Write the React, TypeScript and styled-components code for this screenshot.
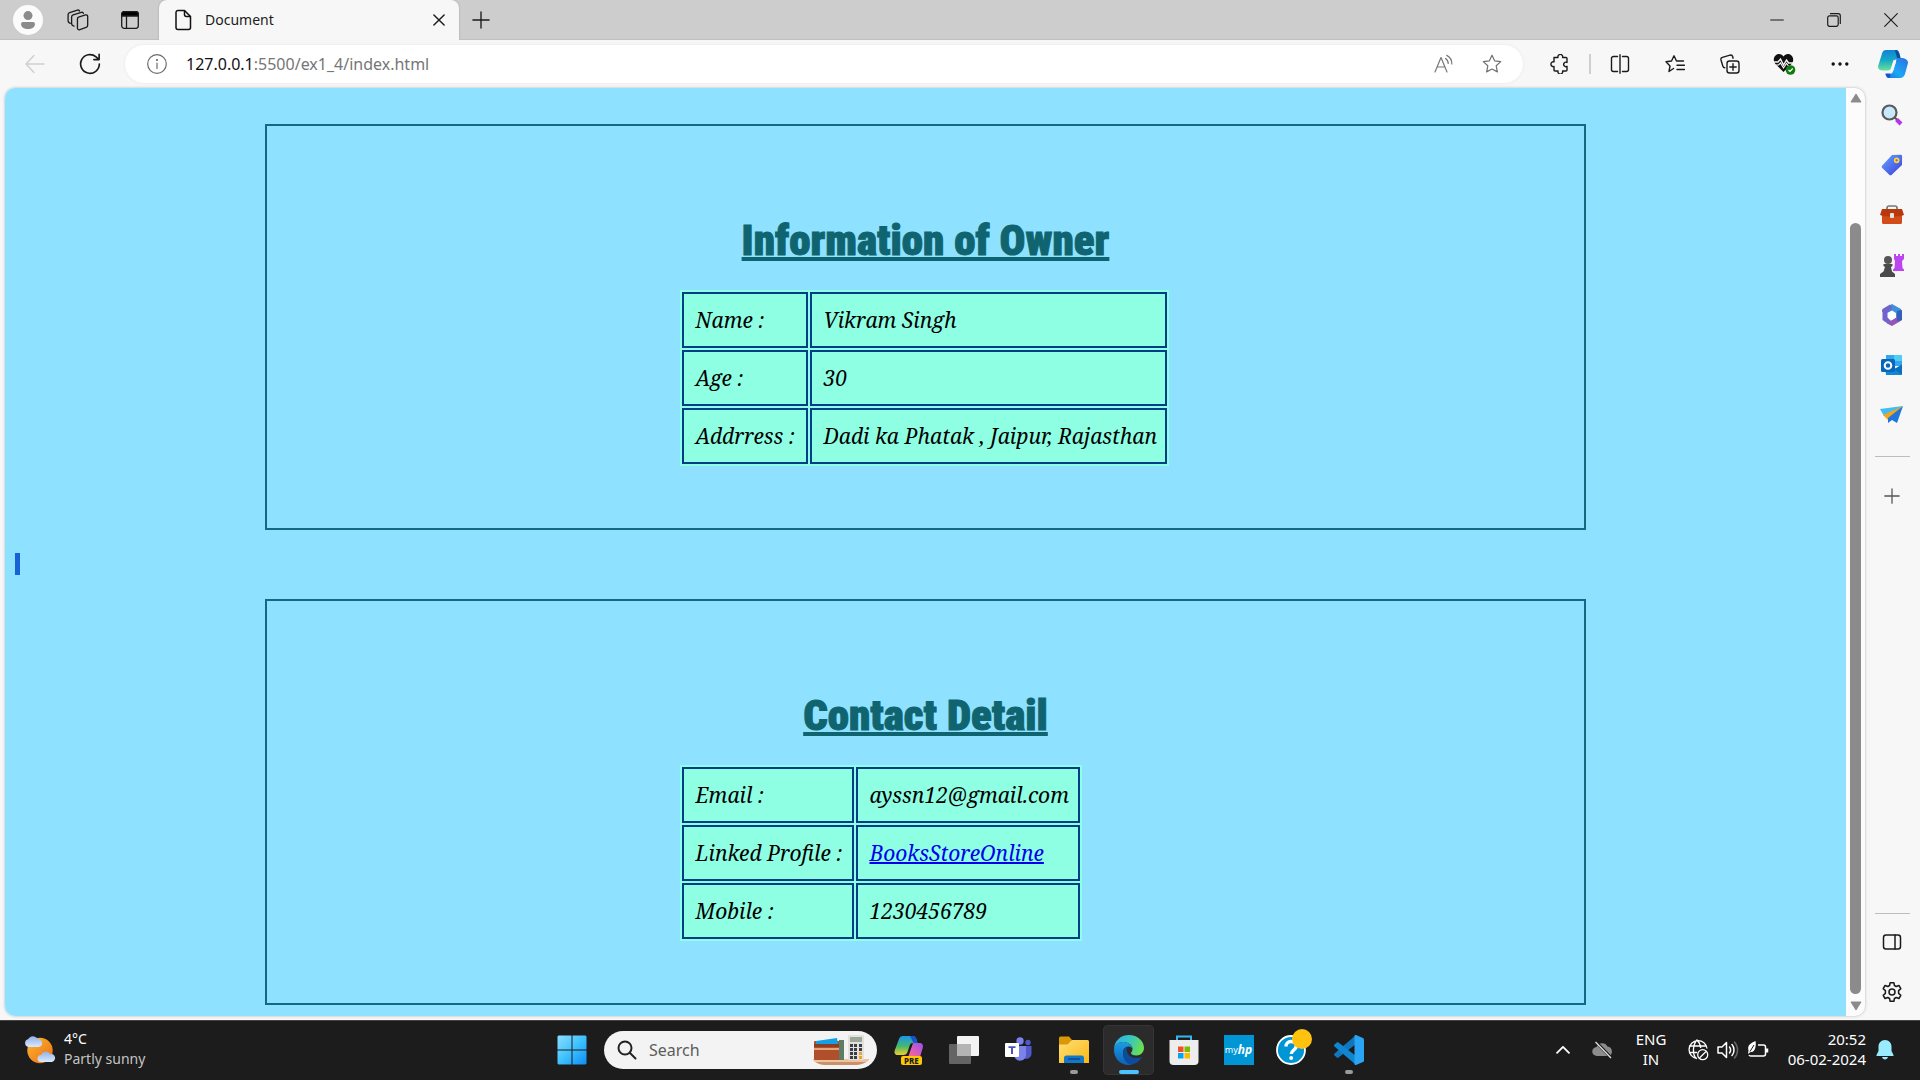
import React from 'react';
import styled, { createGlobalStyle, css } from 'styled-components';

const ui = '"Segoe UI", "Noto Sans", "Open Sans", sans-serif';

const Global = createGlobalStyle`
  * { box-sizing: border-box; }
  body { margin: 0; background: #f7f7f7; font-family: ${ui}; color: #1b1b1b; }
  button { border: 0; padding: 0; background: none; color: inherit; font: inherit; cursor: pointer; }
  svg { display: block; flex: none; }
`;

const Screen = styled.div`
  display: flex;
  flex-direction: column;
  height: 100vh;
  overflow: hidden;
`;

/* ---------- tab strip ---------- */
const TabStrip = styled.header`
  display: flex;
  flex: none;
  height: 40px;
  background: #cdcdcd;
  box-shadow: inset 0 -1px 0 #c0c0c0;
`;
const StripButton = styled.button<{ $w: number }>`
  display: grid;
  place-items: center;
  width: ${p => p.$w}px;
  height: 40px;
`;
const Avatar = styled.span`
  display: grid;
  place-items: center;
  width: 30px;
  height: 30px;
  border-radius: 50%;
  background: #fbfbfb;
`;
const Tab = styled.div`
  display: flex;
  align-items: center;
  width: 300px;
  padding: 0 8px 0 15px;
  border-radius: 8px 8px 0 0;
  background: #f7f7f7;
  box-shadow: 0 0 2px #9a9a9a;
  clip-path: inset(0 -3px 0 -3px);
`;
const TabTitle = styled.span`
  flex: 1;
  margin-left: 13px;
  font-size: 14px;
  line-height: 20px;
`;
const Spacer = styled.div`
  flex: 1;
`;

/* ---------- toolbar ---------- */
const Toolbar = styled.nav`
  display: flex;
  flex: none;
  align-items: center;
  height: 48px;
  padding: 0 1px 0 7px;
`;
const ToolButton = styled.button<{ $w?: number }>`
  display: grid;
  flex: none;
  place-items: center;
  width: ${p => p.$w ?? 55}px;
  height: 40px;
`;
const AddressBar = styled.label`
  display: flex;
  flex: 1;
  align-items: center;
  height: 38px;
  margin: 0 9px 0 8px;
  padding: 0 7px 0 22px;
  border-radius: 19px;
  background: #fff;
  box-shadow: 0 0 3px #e6e6e6;
  font-size: 16px;
  line-height: 24px;
`;
const Host = styled.span`
  margin-left: 19px;
  color: #111;
`;
const AddressInput = styled.input`
  flex: 1;
  min-width: 0;
  padding: 0;
  border: 0;
  outline: 0;
  background: none;
  color: #767676;
  font: inherit;
`;
const ToolDivider = styled.span`
  width: 2px;
  height: 20px;
  margin: 0 1px 0 2px;
  background: #cfcfcf;
`;

/* ---------- main area ---------- */
const Main = styled.div`
  display: flex;
  flex: 1;
  min-height: 0;
  padding-left: 5px;
`;
const Viewport = styled.div`
  display: flex;
  flex: 1;
  margin-bottom: 4px;
  overflow: hidden;
  border-radius: 10px;
  background: #fcfcfc;
  box-shadow: 0 0 3px #b4b4b4;
`;
const Page = styled.main`
  flex: 1;
  padding-top: 36px;
  overflow: hidden;
  background: #8ee2ff;
  color: #000;
`;
const Card = styled.section`
  margin: 0 260px;
  padding: 87px 0 62px;
  border: 2px solid #116a7f;
`;
const Heading = styled.h1`
  margin: 0 0 23px;
  color: #0f6470;
  font-family: "Roboto Condensed", "Liberation Sans Narrow", "DejaVu Sans Condensed", sans-serif;
  font-size: 43px;
  font-weight: 900;
  line-height: 54px;
  text-align: center;
  text-decoration: underline;
  text-decoration-thickness: 4px;
  text-decoration-skip-ink: none;
  text-underline-offset: 2px;
  -webkit-text-stroke: 1px #0f6470;
`;
const Details = styled.table`
  margin-left: calc(50% - 246px);
  border-spacing: 2px;
  background: #8effe3;
  font-family: "Noto Serif", "DejaVu Serif Condensed", "Liberation Serif", serif;
  font-size: 21px;
  font-style: italic;
  line-height: 28px;
`;
const cell = css`
  height: 56px;
  padding: 0 7px 0 12px;
  border: 2px solid #003f88;
  font-weight: 400;
  text-align: left;
  white-space: nowrap;
`;
const Label = styled.th<{ $w: number }>`
  ${cell}
  min-width: ${p => p.$w}px;
`;
const Value = styled.td<{ $w: number }>`
  ${cell}
  min-width: ${p => p.$w}px;
`;
const ProfileLink = styled.a`
  color: #0000ee;
  text-decoration-thickness: 2px;
  text-decoration-skip-ink: none;
`;
const BlankLine = styled.div`
  height: 69px;
  padding: 23px 10px;
`;
const SelectedBreak = styled.span`
  display: block;
  width: 5px;
  height: 22px;
  background: #1763d6;
`;

const ScrollBar = styled.div`
  display: flex;
  flex-direction: column;
  align-items: center;
  width: 19px;
`;
const ScrollArrow = styled.button`
  display: grid;
  place-items: center;
  width: 19px;
  height: 20px;
`;
const ScrollGap = styled.div`
  flex: 115;
`;
const Thumb = styled.div`
  flex: 771;
  width: 11px;
  margin-bottom: 2px;
  border-radius: 6px;
  background: #8b8b8b;
`;

const Sidebar = styled.aside`
  display: flex;
  flex-direction: column;
  align-items: center;
  width: 55px;
  padding: 2px 1px 3px 0;
`;
const SideButton = styled.button`
  display: grid;
  place-items: center;
  width: 40px;
  height: 50px;
`;
const SideRule = styled.hr`
  width: 35px;
  height: 1px;
  margin: 16px 0 14px;
  border: 0;
  background: #bdbdbd;
`;
const LowerRule = styled(SideRule)`
  margin: 0 0 3px;
`;

/* ---------- taskbar ---------- */
const Taskbar = styled.footer`
  display: grid;
  flex: none;
  grid-template-columns: 1fr auto 1fr;
  align-items: center;
  height: 60px;
  padding-bottom: 2px;
  border-top: 1px solid #444;
  background: #1c1c1c;
  color: #fff;
  font-size: 15px;
  line-height: 20px;
`;
const Weather = styled.button`
  display: flex;
  gap: 8px;
  align-items: center;
  padding-left: 24px;
  font-size: 14px;
  text-align: left;
`;
const Lines = styled.span`
  display: flex;
  flex-direction: column;
  padding-bottom: 2px;
`;
const Dim = styled.span`
  color: #c4c4c4;
`;
const Apps = styled.div`
  display: flex;
  align-items: center;
`;
const AppButton = styled.button<{ $active?: boolean }>`
  position: relative;
  display: grid;
  place-items: center;
  width: 51px;
  height: 50px;
  margin: 0 2px;
  border-radius: 5px;
  ${p => p.$active && css`background: #2b2b2b; box-shadow: inset 0 0 0 1px #353535;`}
`;
const Indicator = styled.span<{ $active?: boolean }>`
  position: absolute;
  bottom: 1px;
  left: 50%;
  width: ${p => (p.$active ? 20 : 8)}px;
  height: 4px;
  border-radius: 2px;
  background: ${p => (p.$active ? '#4cc2ff' : '#9a9a9a')};
  transform: translateX(-50%);
`;
const SearchBox = styled.label`
  display: flex;
  align-items: center;
  width: 273px;
  height: 38px;
  margin: 0 4px 0 5px;
  padding: 0 8px 0 13px;
  border-radius: 19px;
  background: #f3f3f3;
`;
const SearchInput = styled.input`
  flex: 1;
  min-width: 0;
  padding: 0 0 0 12px;
  border: 0;
  outline: 0;
  background: none;
  font-family: ${ui};
  font-size: 16px;
  line-height: 24px;
  &::placeholder { color: #5c5c5c; opacity: 1; }
`;
const Tray = styled.div`
  display: flex;
  align-items: center;
  justify-content: flex-end;
  padding-right: 21px;
`;
const TrayButton = styled.button<{ $w: number }>`
  display: grid;
  place-items: center;
  width: ${p => p.$w}px;
  height: 48px;
`;
const Quick = styled.button`
  display: flex;
  gap: 8px;
  align-items: center;
  margin-left: 10px;
`;
const Clock = styled.button`
  width: 92px;
  margin: 0 5px;
  text-align: right;
  white-space: nowrap;
`;

/* ---------- line icons ---------- */
const Line = ({ size = 20, w = 1.4, color = '#1b1b1b', children }: { size?: number; w?: number; color?: string; children: React.ReactNode }) => (
  <svg width={size} height={size} viewBox="0 0 20 20" fill="none" stroke={color} strokeWidth={w} strokeLinecap="round" strokeLinejoin="round" aria-hidden="true">
    {children}
  </svg>
);

const starPath = 'M10 1.2l2.6 5.6 6.1.8-4.5 4.2 1.2 6.1L10 15l-5.4 2.9 1.2-6.1L1.3 7.6l6.1-.8z';

const ToolIcons = {
  person: (
    <svg width="16" height="18" viewBox="0 0 16 18" fill="#8b8b8b"><circle cx="8" cy="4.6" r="4.5" /><path d="M1 13a2 2 0 0 1 2-2h10a2 2 0 0 1 2 2c0 3-3 5-7 5s-7-2-7-5z" /></svg>
  ),
  workspaces: (
    <Line size={22} w={1.2}>
      <path d="M10.500 7.300l6.300-1.900c1-.3 2 .3 2 1.400v8c0 1-.5 1.700-1.400 2l-5.700 2c-1.100.4-2.200-.3-2.200-1.400V9c0-.8.300-1.500 1-1.700z" />
      <path d="M6.400 15.600l-1-.4a2 2 0 0 1-1.200-1.800V7.200a2 2 0 0 1 1.400-1.900L13 3c1-.2 1.700.2 1.900.9" />
      <path d="M3 13l-.8-.4A2 2 0 0 1 1 10.800V5.200a2 2 0 0 1 1.400-1.900L9.500 1c1-.2 1.700.2 1.900.9" />
    </Line>
  ),
  tabs: (
    <Line w={1.3}>
      <rect x="1.700" y="1.700" width="16.600" height="16.600" rx="2.500" />
      <path d="M1.700 6V4a2.300 2.300 0 0 1 2.300-2.300h12A2.300 2.300 0 0 1 18.300 4v2z" fill="#000" />
      <path d="M6.500 6v12" />
    </Line>
  ),
  doc: (
    <svg width="18" height="22" viewBox="0 0 18 22" fill="none" stroke="#111" strokeWidth="1.500" strokeLinejoin="round"><path d="M4 1.500h6.500L16.500 7.500v11a2 2 0 0 1-2 2H4a2 2 0 0 1-2-2v-15a2 2 0 0 1 2-2z" /><path d="M10.500 1.500v4a2 2 0 0 0 2 2h4" /></svg>
  ),
  back: <Line color="#cfcfcf"><path d="M19 10H1M9 1.500L1 10l8 8.500" /></Line>,
  refresh: <Line size={22} w={1.500}><path d="M18.500 10a8.500 8.500 0 1 1-3-6.500l2.500 2.200M18.300 1.200v4.800h-4.800" /></Line>,
  info: <Line w={1.200} color="#6b6b6b"><circle cx="10" cy="10" r="9.300" /><path d="M10 9v5.500" /><circle cx="10" cy="6" r=".5" fill="#6b6b6b" /></Line>,
  readAloud: <Line color="#777" w={1.200}><path d="M1 18L7 3.500 13 18M3 13h8" /><path d="M11.500 4.500a6 6 0 0 1 2.700 5M12.800 1.400a9.500 9.500 0 0 1 5 8.600" /></Line>,
  star: <Line color="#707070" w={1.200}><path d={starPath} /></Line>,
  puzzle: <Line><path d="M4 3.500h4a2.400 2.400 0 1 1 4.600 0H16c.6 0 1 .4 1 1v4a2.200 2.200 0 1 0 0 3.800V16c0 .6-.4 1-1 1h-3.400a2.400 2.400 0 1 1-4.600 0H5c-.6 0-1-.4-1-1v-3.500a2.400 2.400 0 1 1 0-4.600z" /></Line>,
  split: <Line><path d="M7.500 2.500h-4a2 2 0 0 0-2 2v11a2 2 0 0 0 2 2h4M12.500 2.500h4a2 2 0 0 1 2 2v11a2 2 0 0 1-2 2h-4M10 .8v18.400" /></Line>,
  favorites: <Line><path d="M8.500 14.500L4 17.500 5 12 1 7.800l5.500-.8L9 1.800 11.500 7h7M12 11.300h7.500M12 15.500h7.500" /></Line>,
  collections: <Line><rect x="7" y="7" width="12" height="12" rx="2.500" /><path d="M13 9.800v6.400M9.800 13h6.400M4.800 13.800c-1 0-1.700-.8-2-1.800L1 6c-.3-1.200.3-2.300 1.400-2.600L10 1.200c1.200-.3 2.300.2 2.600 1.300l.5 1.700" /></Line>,
  heart: (
    <svg width="23" height="22" viewBox="0 0 23 22"><path d="M10.500 19L2 10.500C-1 6 2 1 6 1c2 0 3.500 1 4.500 2.500C11.500 2 13 1 15 1c4 0 7 5 4 9.500z" fill="#111" /><path d="M1 9h4l2.500-3 3 6 3-5 2 3h5" fill="none" stroke="#f7f7f7" strokeWidth="1.400" /><path d="M3 12h2.500L7.500 10l3 5 3-4.500 2 2.500" fill="none" stroke="#f7f7f7" strokeWidth="1.100" /><circle cx="17.500" cy="17" r="4.800" fill="#107c10" /><path d="M15.500 17l1.500 1.500 2.700-3" fill="none" stroke="#fff" strokeWidth="1.200" /></svg>
  ),
  dots: <svg width="18" height="4" viewBox="0 0 18 4" fill="#111"><circle cx="2.200" cy="2" r="1.700" /><circle cx="9" cy="2" r="1.700" /><circle cx="15.800" cy="2" r="1.700" /></svg>,
};

const CopilotBlue = () => (
  <svg width="30" height="28" viewBox="0 0 30 28">
    <defs>
      <linearGradient id="cb1" x1="0" y1="0" x2="0" y2="1"><stop offset="0" stopColor="#1283d8" /><stop offset=".5" stopColor="#16a9c4" /><stop offset="1" stopColor="#69e29a" /></linearGradient>
      <linearGradient id="cb2" x1="1" y1="0" x2="0" y2="1"><stop offset="0" stopColor="#2a6fe0" /><stop offset=".6" stopColor="#1da8f5" /><stop offset="1" stopColor="#1672e0" /></linearGradient>
    </defs>
    <path d="M13 8h10c4 0 7 1.500 7 5l-3 11c-.8 2.500-2.500 4-5 4H11c-2 0-3-2-3.500-4h4c2 0 3-1 3.500-3l3-9z" fill="url(#cb2)" />
    <path d="M8 0h10c2.500 0 3.500 3 4.500 8h-4c-2 0-2.700 1-3.300 3L13 18c-.5 1.800-1.500 2.500-4 2.500H5c-4 0-5.500-2-4.700-5L4 3.500C4.700 1 6 0 8 0z" fill="url(#cb1)" />
    <path d="M17.500 9.500h1l-3.200 11c-.6 1.900-1.800 3-3.800 3h-2c2.200-1.200 3.300-2.500 4-5l1.700-6c.4-1.800 1-2.700 2.300-3z" fill="#f7f7f7" />
    <path d="M7.500 23.500c2 0 4 0 5 0l-1 4.500C9 28 8 26 7.500 23.500z" fill="#1452cf" />
    <path d="M17 0h1c2.500 0 3.500 3 4.500 8H19z" fill="#0a4f9c" />
  </svg>
);

/* ---------- sidebar drawings ---------- */
const SideIcons = {
  search: <svg width="22" height="22" viewBox="0 0 22 22"><path d="M13.500 13.500l3 2.500" stroke="#555" strokeWidth="2" /><path d="M15.500 15.500l4.500 4.500" stroke="#b834e8" strokeWidth="4" /><circle cx="8.500" cy="8.500" r="7" fill="#c8e8fb" stroke="#5a5a5a" strokeWidth="2.200" /></svg>,
  tag: <svg width="22" height="22" viewBox="0 0 22 22"><defs><linearGradient id="tg" x1="0" y1="0" x2="1" y2="1"><stop offset="0" stopColor="#6aa4ff" /><stop offset="1" stopColor="#383fd8" /></linearGradient></defs><path d="M11 1l8.500-.2a1.500 1.500 0 0 1 1.600 1.600L21 11 11 20.500a2 2 0 0 1-3 0l-6.500-6.200a2 2 0 0 1 0-3z" fill="url(#tg)" /><circle cx="15.700" cy="6.300" r="2" fill="#5a72f0" stroke="#ffd238" strokeWidth="1.700" /></svg>,
  toolbox: <svg width="24" height="20" viewBox="0 0 24 20"><path d="M7 5V3a2 2 0 0 1 2-2h6a2 2 0 0 1 2 2v2" fill="none" stroke="#777" strokeWidth="1.700" /><rect x="2" y="9" width="20" height="10" rx="1.500" fill="#d34b18" /><path d="M2 4h20l2 6c-4 2-20 2-24 0z" fill="#b8380c" /><rect x="10" y="8" width="4" height="5" rx="1" fill="#e2e2e2" /></svg>,
  chess: <svg width="24" height="24" viewBox="0 0 24 24"><path d="M14 1h2v2h2V1h2v2h2V1h2v5l-2 2 .5 7 1.500 1.500V18H13v-1.500l1.500-1.500.5-7-1-2z" fill="#bb45ee" /><circle cx="8" cy="7" r="4" fill="#555" /><path d="M3.500 11h9v2l-1.500 1 1 4.500 3 2.500v3H0v-3l3.500-2.500L5 14l-1.500-1z" fill="#4a4a4a" /></svg>,
  m365: <svg width="22" height="24" viewBox="0 0 22 24"><path d="M11 1l9 5 1 7-6 1-4-6-5 2-5-1V7z" fill="#3f8fdc" /><path d="M9 1.500L1.500 6v11l5 3.500 4-2-4-4V9l5-4z" fill="#7362cc" /><path d="M6 20.500l5 2.500 9.500-5.500V13l-5 1-4.500 3z" fill="#9257b8" /><path d="M16 8l5-1v10l-5 1z" fill="#365fbc" /><path d="M11 7.500l4 2.400v4.600l-4 2.400-4-2.400V9.900z" fill="#fff" /></svg>,
  outlook: <svg width="22" height="22" viewBox="0 0 22 22"><rect x="5" y="1" width="16" height="11" fill="#34a6ec" /><path d="M13 1h8v6h-8z" fill="#52ccf5" /><path d="M4 11l9 5 8-6v10a1 1 0 0 1-1 1H5z" fill="#1386d6" /><path d="M13 15l8 6V11z" fill="#0c6ebd" /><rect x="0" y="5" width="14" height="13" rx="1.500" fill="#0668bc" /><circle cx="7" cy="11.500" r="3.300" fill="none" stroke="#fff" strokeWidth="2" /></svg>,
  plane: <svg width="24" height="18" viewBox="0 0 24 18"><path d="M0 3l23-3-11 8-8 2z" fill="#41bdf1" /><path d="M3 9L23 0 8 14z" fill="#f3a51d" /><path d="M23 0l-6 17-5-3-4 3v-5z" fill="#2176dc" /></svg>,
  plus: <Line size={16} w={1.600} color="#555"><path d="M10 1v18M1 10h18" /></Line>,
  panel: <Line w={1.500}><rect x="1.500" y="3" width="17" height="14" rx="2.500" /><path d="M13 3v14" /></Line>,
  gear: <Line size={22} w={1.400}><circle cx="10" cy="10" r="2.700" /><path d="M8.300 1.500h3.400l.5 2.600 1.600.9 2.500-.9L18 7l-2 1.800v2.400L18 13l-1.700 2.900-2.500-.9-1.600.9-.5 2.600H8.300l-.5-2.600-1.600-.9-2.500.9L2 13l2-1.800V8.800L2 7l1.700-2.900 2.500.9 1.600-.9z" /></Line>,
};

/* ---------- taskbar drawings ---------- */
const WeatherIcon = () => (
  <svg width="32" height="30" viewBox="0 0 32 30">
    <defs>
      <linearGradient id="sun" x1="0" y1="0" x2="1" y2="1"><stop offset="0" stopColor="#f9b934" /><stop offset="1" stopColor="#ef6c12" /></linearGradient>
      <linearGradient id="cl" x1="0" y1="0" x2="0" y2="1"><stop offset="0" stopColor="#8fb2ec" /><stop offset="1" stopColor="#dce8fb" /></linearGradient>
    </defs>
    <circle cx="16" cy="15.500" r="12.700" fill="url(#sun)" />
    <path d="M4.500 12a4 4 0 0 1-.5-7.800A5.500 5.500 0 0 1 13.500 4a4 4 0 0 1 1 8z" fill="url(#cl)" />
    <path d="M17 27a3.500 3.500 0 0 1 0-7 5 5 0 0 1 9-1 4 4 0 0 1 2 8z" fill="url(#cl)" />
  </svg>
);
const WindowsLogo = () => (
  <svg width="30" height="30" viewBox="0 0 30 30">
    <defs><linearGradient id="win" gradientUnits="userSpaceOnUse" x1="0" y1="0" x2="30" y2="30"><stop offset="0" stopColor="#8fe0ff" /><stop offset=".5" stopColor="#3fc1ff" /><stop offset="1" stopColor="#0b8cf5" /></linearGradient></defs>
    <path d="M1.500.5H14.500V14.500H.5V1.500zM15.500.5h13l1 1v13h-14zM.5 15.500h14v14h-13l-1-1zM15.500 15.500h14v13l-1 1h-13z" fill="url(#win)" />
  </svg>
);
const WalletArt = () => (
  <svg width="56" height="30" viewBox="0 0 56 30">
    <path d="M0 24h56c-2 4-9 6-14 6H14C7 30 2 28 0 24z" fill="#c9916a" />
    <path d="M0 24h56l-2 3H2z" fill="#eec49f" />
    <rect x="1" y="6" width="28" height="19" rx="1" fill="#b04f2b" />
    <path d="M3 6l21-3 1 6H3z" fill="#14a0e6" />
    <path d="M1 9h28v3H1z" fill="#8e3d20" />
    <path d="M1 13h25v2H1z" fill="#e5a67c" />
    <rect x="26" y="5" width="5" height="20" fill="#5f7d65" />
    <rect x="35" y="0" width="16" height="25" rx="1" fill="#e4e0dc" />
    <rect x="37" y="2" width="12" height="5" fill="#9aa79a" />
    {[9, 13, 17, 21].map(y => [37, 41, 46].map(x => <rect key={`${x}${y}`} x={x} y={y} width="3" height="3" fill={x === 46 && y > 15 ? '#eda22c' : '#393d45'} />))}
  </svg>
);
const PreLabel = styled.span`
  position: absolute;
  top: 31px;
  left: 18px;
  padding: 0 3px;
  border-radius: 2px;
  background: #ffc800;
  color: #1c1c1c;
  font-size: 8px;
  font-weight: 800;
  line-height: 9px;
`;
const CopilotColor = () => (
  <svg width="30" height="30" viewBox="0 0 30 30">
    <defs>
      <linearGradient id="cc1" x1="0" y1="0" x2="0" y2="1"><stop offset="0" stopColor="#1896ee" /><stop offset=".55" stopColor="#48b86c" /><stop offset="1" stopColor="#f2cf28" /></linearGradient>
      <linearGradient id="cc2" x1="1" y1="0" x2="0" y2="1"><stop offset="0" stopColor="#9454f0" /><stop offset=".6" stopColor="#ed60a5" /><stop offset="1" stopColor="#fb8a5e" /></linearGradient>
    </defs>
    <path d="M19 8h6c3.500 0 4.500 2 3.700 5L26 22c-.7 2-2 3-4 3H10l4-4z" fill="url(#cc2)" />
    <path d="M9 1h10c2.300 0 3.500 2.500 4.500 7h-5c-1.500 0-2.500 1-3 3l-2 6c-.6 2-2 3-4 3H4c-3 0-4-2-3.300-4.500L5 4C5.700 2 7 1 9 1z" fill="url(#cc1)" />
    <path d="M16 1h3c2.300 0 3.500 2.500 4.500 7h-4z" fill="#1656c9" />
    <path d="M18.500 9l-4 12h-3c2-.8 2.500-2 3.200-4l2-6c.4-1.200.8-1.800 1.800-2z" fill="#1c1c1c" />
  </svg>
);
const TaskView = () => (
  <svg width="30" height="30" viewBox="0 0 30 30"><rect x="8" y="1" width="22" height="20" rx="1" fill="#f3f3f3" /><rect x="0" y="9" width="22" height="20" rx="1" fill="#717171" fillOpacity=".85" /><path d="M8 9h14v12H8z" fill="#b4b4b4" /></svg>
);
const Teams = () => (
  <svg width="28" height="26" viewBox="0 0 28 26"><circle cx="15" cy="4" r="3.700" fill="#7b83eb" /><circle cx="23" cy="5.500" r="2.700" fill="#5059c9" /><path d="M18 9h8.500v8a5 5 0 0 1-7 4.500z" fill="#5059c9" /><path d="M9 9h12v9a6 6 0 0 1-11.500 2z" fill="#7b83eb" /><rect x="0" y="6" width="14" height="14" rx="1" fill="#fff" /><path d="M3.500 9.200h7v1.900H8v6H6v-6H3.500z" fill="#4b53bc" /></svg>
);
const Folder = () => (
  <svg width="30" height="28" viewBox="0 0 30 28"><defs><linearGradient id="fo" x1="0" y1="0" x2="1" y2="1"><stop offset="0" stopColor="#ffdf76" /><stop offset="1" stopColor="#f9b916" /></linearGradient></defs><path d="M0 2a1.500 1.500 0 0 1 1.500-1.500H10L13 4l-3 6H0z" fill="#dc9706" /><path d="M0 8.500h8.500L13 4h15.500A1.500 1.500 0 0 1 30 5.500V27H0z" fill="url(#fo)" /><path d="M5 27v-5a2.500 2.500 0 0 1 2.500-2.500h15A2.500 2.500 0 0 1 25 22v5z" fill="#1478c8" /><path d="M9 23h12" stroke="#0a4a8a" strokeWidth="1.500" /></svg>
);
const EdgeLogo = () => (
  <svg width="30" height="30" viewBox="0 0 30 30">
    <defs>
      <linearGradient id="ed1" x1="0" y1=".2" x2="1" y2=".5"><stop offset="0" stopColor="#2faeea" /><stop offset=".5" stopColor="#37c6c0" /><stop offset="1" stopColor="#6be04e" /></linearGradient>
      <linearGradient id="ed2" x1="0" y1="0" x2="0" y2="1"><stop offset="0" stopColor="#1b9de2" /><stop offset="1" stopColor="#0f5fb5" /></linearGradient>
    </defs>
    <path d="M0 15C0 6 6.500 0 15 0s15 6 15 13c0 4.500-3.500 7.500-7.500 7.500-3.500 0-5.500-1.300-5.500-2.500 0-.8 1.500-1.500 1.500-4C18.500 10 14 7 9 7 4 7 .5 10.500 0 15z" fill="url(#ed1)" />
    <path d="M0 15c0-4.500 4-8 9-8 5.500 0 9 3.500 9.500 6.500-1-1.300-2.500-2-4-2-3.500 0-5.500 3-5.500 6.500C9 23.500 13 29 18.500 29.500 8 32 0 24.500 0 15z" fill="url(#ed2)" />
    <path d="M9 18c0-3 1.500-5.500 4-6.300-1.500 4 1 11.300 9 11.300 3 0 5-1.200 5.700-.7.6.5-4 6.700-10.200 7.200C12.500 29 9 23.500 9 18z" fill="#0d4c9a" />
  </svg>
);
const Store = () => (
  <svg width="30" height="30" viewBox="0 0 30 30"><path d="M8 6V1.500h14V6" fill="none" stroke="#38b4f0" strokeWidth="2" /><path d="M.5 5h29v21a4 4 0 0 1-4 4h-21a4 4 0 0 1-4-4z" fill="#ededed" /><path d="M9 11.500h5.500V17H9z" fill="#f25022" /><path d="M15.500 11.500H21V17h-5.500z" fill="#7fba00" /><path d="M9 18h5.500v5.500H9z" fill="#00a4ef" /><path d="M15.500 18H21v5.500h-5.500z" fill="#ffb900" /></svg>
);
const MyHp = styled.span`
  display: flex;
  align-items: center;
  justify-content: center;
  width: 30px;
  height: 30px;
  background: #0096d6;
  color: #fff;
  font-size: 9px;
  line-height: 12px;
  b { font-size: 12px; font-style: italic; }
`;
const Help = () => (
  <svg width="36" height="36" viewBox="0 0 36 36"><circle cx="15" cy="21" r="14" fill="#0096d6" stroke="#fff" strokeWidth="1.800" /><path d="M10 17.500c0-3 2-5 5-5s5.300 1.800 5.300 4.500c0 4-5 4-5 8" fill="none" stroke="#fff" strokeWidth="3.400" /><circle cx="15.200" cy="29" r="2" fill="#fff" /><circle cx="26" cy="10" r="10" fill="#ffc20e" /></svg>
);
const HelpSlot = styled.span`
  padding-bottom: 6px;
`;
const VsCode = () => (
  <svg width="30" height="30" viewBox="0 0 30 30"><path d="M22 0v9L4.500 22.500c-.6.5-1.200.5-1.700 0L.5 20.500c-.6-.6-.6-1.300 0-1.900z" fill="#1176bd" /><path d="M22 30v-9L4.500 7.500c-.6-.5-1.200-.5-1.700 0L.5 9.500c-.6.6-.6 1.300 0 1.900z" fill="#0f86d2" /><path d="M22 0l7 3c.6.300 1 .9 1 1.600v20.800c0 .7-.4 1.300-1 1.600l-7 3c-1 .3-1.500-.3-1.500-1V1c0-.7.500-1.300 1.500-1z" fill="#2aa4f4" /></svg>
);

const tools = [
  ['Split screen', ToolIcons.split],
  ['Favorites', ToolIcons.favorites],
  ['Collections', ToolIcons.collections],
  ['Browser essentials', ToolIcons.heart],
  ['Settings and more', ToolIcons.dots],
] as const;

const sideApps = [
  ['Search', SideIcons.search],
  ['Shopping', SideIcons.tag],
  ['Tools', SideIcons.toolbox],
  ['Games', SideIcons.chess],
  ['Microsoft 365', SideIcons.m365],
  ['Outlook', SideIcons.outlook],
  ['Drop', SideIcons.plane],
] as const;

type Row = [string, React.ReactNode];
const InfoCard = ({ title, widths, rows }: { title: string; widths: [number, number]; rows: Row[] }) => (
  <Card>
    <Heading>{title}</Heading>
    <Details>
      <tbody>
        {rows.map(([label, value]) => (
          <tr key={label}>
            <Label scope="row" $w={widths[0]}>{label}</Label>
            <Value $w={widths[1]}>{value}</Value>
          </tr>
        ))}
      </tbody>
    </Details>
  </Card>
);

export default function App() {
  return (
    <Screen>
      <Global />
      <TabStrip>
        <StripButton $w={56} aria-label="Profile"><Avatar>{ToolIcons.person}</Avatar></StripButton>
        <StripButton $w={44} aria-label="Workspaces">{ToolIcons.workspaces}</StripButton>
        <StripButton $w={59} aria-label="Tab actions">{ToolIcons.tabs}</StripButton>
        <Tab>
          {ToolIcons.doc}
          <TabTitle>Document</TabTitle>
          <StripButton $w={24} aria-label="Close tab"><Line size={12} w={2.400}><path d="M1.500 1.500l17 17M18.500 1.500l-17 17" /></Line></StripButton>
        </Tab>
        <StripButton $w={44} aria-label="New tab"><Line size={18} w={1.500}><path d="M10 1v18M1 10h18" /></Line></StripButton>
        <Spacer />
        <StripButton $w={57} aria-label="Minimize"><Line size={14} w={1.600}><path d="M1 10h18" /></Line></StripButton>
        <StripButton $w={57} aria-label="Restore"><Line size={14} w={1.700}><rect x="1" y="4" width="15" height="15" rx="2.500" /><path d="M5 1h11a3 3 0 0 1 3 3v11" /></Line></StripButton>
        <StripButton $w={58} aria-label="Close"><Line size={14} w={1.600}><path d="M1 1l18 18M19 1L1 19" /></Line></StripButton>
      </TabStrip>

      <Toolbar>
        <ToolButton aria-label="Back">{ToolIcons.back}</ToolButton>
        <ToolButton aria-label="Refresh">{ToolIcons.refresh}</ToolButton>
        <AddressBar>
          {ToolIcons.info}
          <Host>127.0.0.1</Host>
          <AddressInput aria-label="Address" defaultValue=":5500/ex1_4/index.html" />
          <ToolButton $w={49} aria-label="Read aloud">{ToolIcons.readAloud}</ToolButton>
          <ToolButton $w={48} aria-label="Add to favorites">{ToolIcons.star}</ToolButton>
        </AddressBar>
        <ToolButton aria-label="Extensions">{ToolIcons.puzzle}</ToolButton>
        <ToolDivider />
        {tools.map(([name, icon]) => <ToolButton key={name} aria-label={name}>{icon}</ToolButton>)}
        <ToolButton $w={52} aria-label="Copilot"><CopilotBlue /></ToolButton>
      </Toolbar>

      <Main>
        <Viewport>
          <Page>
            <InfoCard
              title="Information of Owner"
              widths={[126, 357]}
              rows={[['Name :', 'Vikram Singh'], ['Age :', '30'], ['Addrress :', 'Dadi ka Phatak , Jaipur, Rajasthan']]}
            />
            <BlankLine><SelectedBreak /></BlankLine>
            <InfoCard
              title="Contact Detail"
              widths={[172, 224]}
              rows={[['Email :', 'ayssn12@gmail.com'], ['Linked Profile :', <ProfileLink href="#profile">BooksStoreOnline</ProfileLink>], ['Mobile :', '1230456789']]}
            />
          </Page>
          <ScrollBar>
            <ScrollArrow aria-label="Scroll up"><svg width="12" height="10" viewBox="0 0 12 10"><path d="M6 1l5 8H1z" fill="#8b8b8b" stroke="#8b8b8b" strokeLinejoin="round" /></svg></ScrollArrow>
            <ScrollGap />
            <Thumb />
            <ScrollArrow aria-label="Scroll down"><svg width="12" height="10" viewBox="0 0 12 10"><path d="M6 9l5-8H1z" fill="#8b8b8b" stroke="#8b8b8b" strokeLinejoin="round" /></svg></ScrollArrow>
          </ScrollBar>
        </Viewport>
        <Sidebar>
          {sideApps.map(([name, icon]) => <SideButton key={name} aria-label={name}>{icon}</SideButton>)}
          <SideRule />
          <SideButton aria-label="Customize">{SideIcons.plus}</SideButton>
          <Spacer />
          <LowerRule />
          <SideButton aria-label="Toggle sidebar">{SideIcons.panel}</SideButton>
          <SideButton aria-label="Settings">{SideIcons.gear}</SideButton>
        </Sidebar>
      </Main>

      <Taskbar>
        <Weather>
          <WeatherIcon />
          <Lines><span>4°C</span><Dim>Partly sunny</Dim></Lines>
        </Weather>
        <Apps>
          <AppButton aria-label="Start"><WindowsLogo /></AppButton>
          <SearchBox>
            <Line size={20} w={2} color="#222"><circle cx="8" cy="8" r="6.500" /><path d="M13 13l5.500 5.500" /></Line>
            <SearchInput placeholder="Search" aria-label="Search" />
            <WalletArt />
          </SearchBox>
          <AppButton aria-label="Copilot preview"><CopilotColor /><PreLabel>PRE</PreLabel></AppButton>
          <AppButton aria-label="Task view"><TaskView /></AppButton>
          <AppButton aria-label="Teams"><Teams /></AppButton>
          <AppButton aria-label="File Explorer"><Folder /><Indicator /></AppButton>
          <AppButton $active aria-label="Edge"><EdgeLogo /><Indicator $active /></AppButton>
          <AppButton aria-label="Store"><Store /></AppButton>
          <AppButton aria-label="myHP"><MyHp>my<b>hp</b></MyHp></AppButton>
          <AppButton aria-label="Help"><HelpSlot><Help /></HelpSlot></AppButton>
          <AppButton aria-label="Visual Studio Code"><VsCode /><Indicator /></AppButton>
        </Apps>
        <Tray>
          <TrayButton $w={36} aria-label="Hidden icons"><Line size={14} w={2.600} color="#fff"><path d="M1.500 14L10 5.500l8.500 8.500" /></Line></TrayButton>
          <TrayButton $w={44} aria-label="OneDrive"><svg width="22" height="18" viewBox="0 0 22 18"><path d="M5 15a4.500 4.500 0 0 1-.5-9 6 6 0 0 1 11-.5A5 5 0 0 1 17 15z" fill="#8c8c8c" /><path d="M4 1l15.500 16" stroke="#1c1c1c" strokeWidth="3" /><path d="M3.500 1l15.500 16" stroke="#ddd" strokeWidth="1.400" /></svg></TrayButton>
          <TrayButton $w={52}><Lines><span>ENG</span><span>IN</span></Lines></TrayButton>
          <Quick aria-label="Network, volume and battery">
            <svg width="22" height="22" viewBox="0 0 22 22" fill="none" stroke="#fff" strokeWidth="1.300"><path d="M10 19.500a9 9 0 1 1 10-10M8.500 19c-3-4-3-13 1.500-18 2.500 2.500 3.500 5 3.700 8M2 7h17M2 13.500h8" /><circle cx="15.700" cy="15.700" r="5" /><path d="M12.500 19l6.500-6.500" /></svg>
            <svg width="22" height="20" viewBox="0 0 22 20" fill="none" stroke="#fff" strokeWidth="1.500" strokeLinejoin="round" strokeLinecap="round"><path d="M1 7h4l4.500-4.500v15L5 13H1z" /><path d="M12.500 7a5 5 0 0 1 0 6M15 4.500a8.500 8.500 0 0 1 0 11" /><path d="M17.500 2a12 12 0 0 1 0 16" stroke="#666" /></svg>
            <svg width="22" height="20" viewBox="0 0 22 20" fill="none" stroke="#fff" strokeWidth="1.500"><path d="M11 5h5.500A2 2 0 0 1 18.500 7v7a2 2 0 0 1-2 2H4a2 2 0 0 1-2-1" /><path d="M20 8.500v4" strokeWidth="2.500" /><path d="M8.500 1C4 3 0 5 1.500 10.500L1 14l2.500-2C8 13 9.500 6 8.500 1z" fill="#fff" stroke="none" /><path d="M3 11.500L7 5" stroke="#1c1c1c" strokeWidth="1" /></svg>
          </Quick>
          <Clock><Lines><span>20:52</span><span>06-02-2024</span></Lines></Clock>
          <TrayButton $w={28} aria-label="Notifications"><svg width="18" height="20" viewBox="0 0 18 20" fill="#99ebff"><path d="M9 0c4 0 6.500 3 6.500 6.500V11l2 4c.2.600 0 1-.5 1H1c-.5 0-.7-.4-.5-1l2-4V6.500C2.500 3 5 0 9 0zM6 17h6c-.4 1.500-1.500 2.500-3 2.500S6.400 18.500 6 17z" /></svg></TrayButton>
        </Tray>
      </Taskbar>
    </Screen>
  );
}
